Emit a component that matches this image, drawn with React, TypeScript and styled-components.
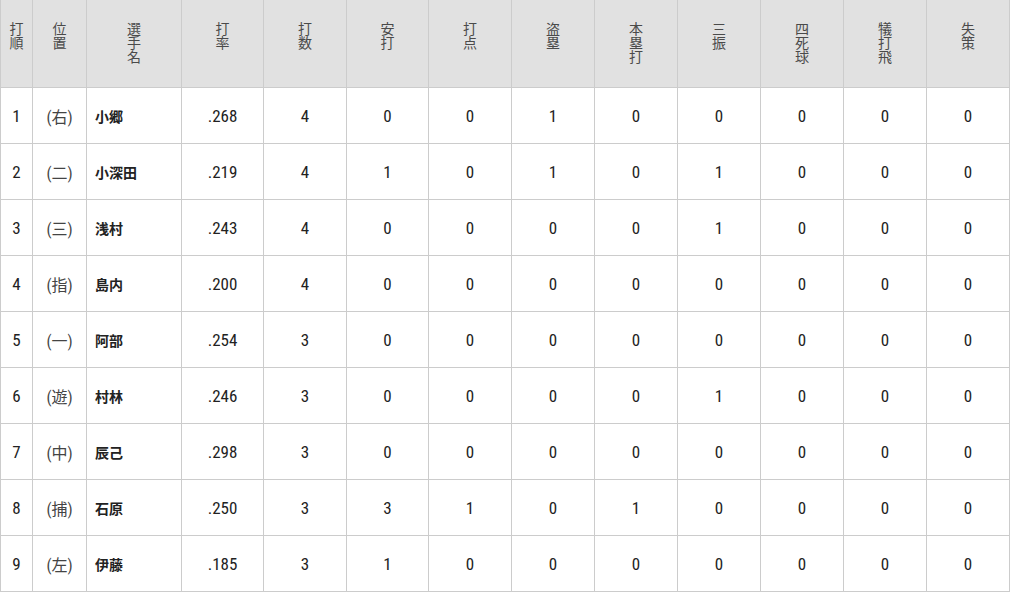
import React from 'react';
import styled, { createGlobalStyle } from 'styled-components';

const GlobalStyle = createGlobalStyle`
    body {
        margin: 0;
        background: #ffffff;
        font-family: "Roboto Condensed", "Liberation Sans Narrow", "DejaVu Sans Condensed", Roboto, "Noto Sans CJK JP", sans-serif;
    }
`;

const Table = styled.table`
    width: 1010px;
    border-collapse: collapse;
    table-layout: fixed;
    border-left: 1px solid #cccccc;
`;

const Th = styled.th`
    background-color: #e1e1e1;
    height: 65px;
    padding: 22px 0 0;
    vertical-align: top;
    border-right: 1px solid #cccccc;
    border-bottom: 1px solid #cccccc;
    color: #4a4a4a;
    font-family: "Noto Sans CJK JP", sans-serif;
    font-size: 14px;
    font-weight: 400;
    line-height: 14px;
`;

const Vertical = styled.span`
    display: inline-block;
    writing-mode: vertical-rl;
    text-orientation: upright;
    line-height: 14px;
`;

const Td = styled.td<{ $align?: 'left' | 'center' }>`
    height: 55px;
    padding: 0 ${(p) => (p.$align === 'left' ? '8px' : '0')};
    border-right: 1px solid #cccccc;
    border-bottom: 1px solid #cccccc;
    text-align: ${(p) => p.$align || 'center'};
    vertical-align: middle;
    color: #222222;
    font-size: 17px;
`;

const Pos = styled.span`
    color: #444444;
    font-size: 16px;
`;

const Name = styled.span`
    font-family: "Noto Sans CJK JP", sans-serif;
    font-size: 14px;
    font-weight: 700;
    color: #222222;
`;

const headers = ['打順', '位置', '選手名', '打率', '打数', '安打', '打点', '盗塁', '本塁打', '三振', '四死球', '犠打飛', '失策'];
const widths = [32, 54, 95, 82, 83, 82, 83, 83, 83, 83, 83, 83, 83];

const rows: [number, string, string, string, ...number[]][] = [
    [1, '右', '小郷', '.268', 4, 0, 0, 1, 0, 0, 0, 0, 0],
    [2, '二', '小深田', '.219', 4, 1, 0, 1, 0, 1, 0, 0, 0],
    [3, '三', '浅村', '.243', 4, 0, 0, 0, 0, 1, 0, 0, 0],
    [4, '指', '島内', '.200', 4, 0, 0, 0, 0, 0, 0, 0, 0],
    [5, '一', '阿部', '.254', 3, 0, 0, 0, 0, 0, 0, 0, 0],
    [6, '遊', '村林', '.246', 3, 0, 0, 0, 0, 1, 0, 0, 0],
    [7, '中', '辰己', '.298', 3, 0, 0, 0, 0, 0, 0, 0, 0],
    [8, '捕', '石原', '.250', 3, 3, 1, 0, 1, 0, 0, 0, 0],
    [9, '左', '伊藤', '.185', 3, 1, 0, 0, 0, 0, 0, 0, 0],
];

const App: React.FC = () => (
    <>
        <GlobalStyle />
        <Table>
            <colgroup>
                {widths.map((w, i) => (
                    <col key={i} style={{ width: w }} />
                ))}
            </colgroup>
            <thead>
                <tr>
                    {headers.map((h) => (
                        <Th key={h}>
                            <Vertical>{h}</Vertical>
                        </Th>
                    ))}
                </tr>
            </thead>
            <tbody>
                {rows.map(([order, pos, name, avg, ...stats]) => (
                    <tr key={order}>
                        <Td>{order}</Td>
                        <Td>
                            <Pos>({pos})</Pos>
                        </Td>
                        <Td $align="left">
                            <Name>{name}</Name>
                        </Td>
                        <Td>{avg}</Td>
                        {stats.map((s, i) => (
                            <Td key={i}>{s}</Td>
                        ))}
                    </tr>
                ))}
            </tbody>
        </Table>
    </>
);

export default App;
